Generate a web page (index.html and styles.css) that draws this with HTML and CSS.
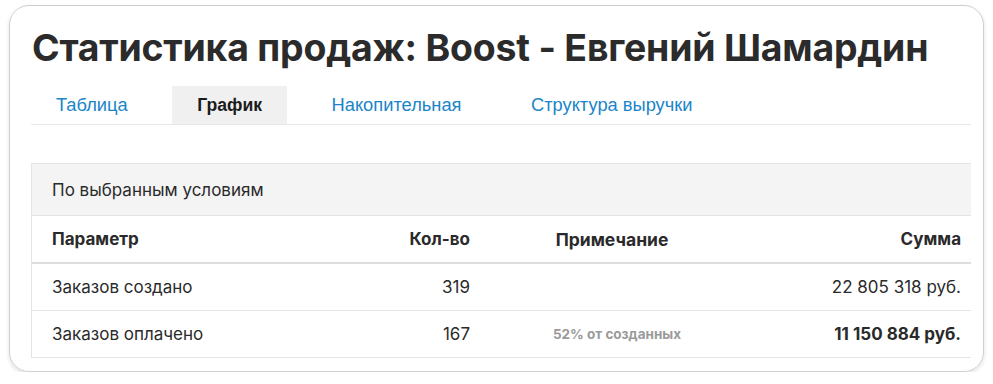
FILE: index.html
```html
<!DOCTYPE html>
<html lang="ru">
<head>
<meta charset="utf-8">
<title>Статистика продаж</title>
<link rel="stylesheet" href="styles.css">
</head>
<body>
<div class="card">
  <h1 class="title">Статистика продаж: Boost - Евгений Шамардин</h1>
  <nav class="tabs">
    <a class="tab">Таблица</a>
    <a class="tab active">График</a>
    <a class="tab">Накопительная</a>
    <a class="tab">Структура выручки</a>
  </nav>
  <div class="stats">
    <div class="caption">По выбранным условиям</div>
    <div class="row head">
      <div class="c1">Параметр</div>
      <div class="c2">Кол-во</div>
      <div class="c3">Примечание</div>
      <div class="c4">Сумма</div>
    </div>
    <div class="row">
      <div class="c1">Заказов создано</div>
      <div class="c2">319</div>
      <div class="c3"></div>
      <div class="c4">22 805 318 руб.</div>
    </div>
    <div class="row">
      <div class="c1">Заказов оплачено</div>
      <div class="c2">167</div>
      <div class="c3 note">52% от созданных</div>
      <div class="c4 strong">11 150 884 руб.</div>
    </div>
  </div>
</div>
</body>
</html>
```

FILE: styles.css
```css
* { box-sizing: border-box; }
html, body { margin: 0; padding: 0; background: #fff; }
body { font-family: Inter, "Liberation Sans", sans-serif; color: #222; }

.card {
  margin: 5px 0 0 9px;
  width: 975px;
  height: 367px;
  border: 1px solid #cfcfcf;
  border-radius: 20px;
  box-shadow: 0 2px 4px rgba(0,0,0,0.12);
  padding: 0 12px 0 21px;
  overflow: hidden;
}

.title {
  margin: 0;
  padding-top: 19px;
  padding-left: 1px;
  font-size: 37.4px;
  line-height: 46px;
  font-weight: 700;
  color: #2b2b2b;
  letter-spacing: -0.2px;
  white-space: nowrap;
}

.tabs {
  display: flex;
  gap: 20px;
  margin-top: 15px;
  border-bottom: 1px solid #e8e8e8;
  padding-left: 0;
}
.tab {
  display: block;
  padding: 0 24.5px 0 25px;
  height: 38px;
  line-height: 38px;
  font-family: "Liberation Sans", Arial, sans-serif;
  font-size: 18.3px;
  color: #1a85c8;
}
.tab.active {
  background: #f0f0f0;
  color: #1c1c1c;
  font-weight: 700;
  font-size: 17.6px;
}

.stats {
  margin-top: 38px;
  border-left: 1px solid #e4e4e4;
  border-top: 1px solid #e4e4e4;
}
.caption {
  background: #f4f4f4;
  height: 52px;
  line-height: 52px;
  padding-left: 20px;
  font-size: 17px;
  color: #2a2a2a;
  border-bottom: 1px solid #e4e4e4;
}
.row {
  display: grid;
  grid-template-columns: 269px 179px 254px 1fr;
  height: 47px;
  align-items: center;
  border-bottom: 1px solid #e4e4e4;
  font-size: 17px;
  color: #2a2a2a;
}
.row.head {
  font-weight: 700;
  border-bottom: 2px solid #dddddd;
  height: 48px;
}
.row > div { padding: 0 10px 0 20px; }
.c2, .c4 { text-align: right; }
.c3 { text-align: center; }
.head .c3 { font-size: 17.5px; }
.row > .note { font-size: 13.5px; font-weight: 700; color: #9a9a9a; padding-left: 30px; }
.strong { font-weight: 700; }
```
